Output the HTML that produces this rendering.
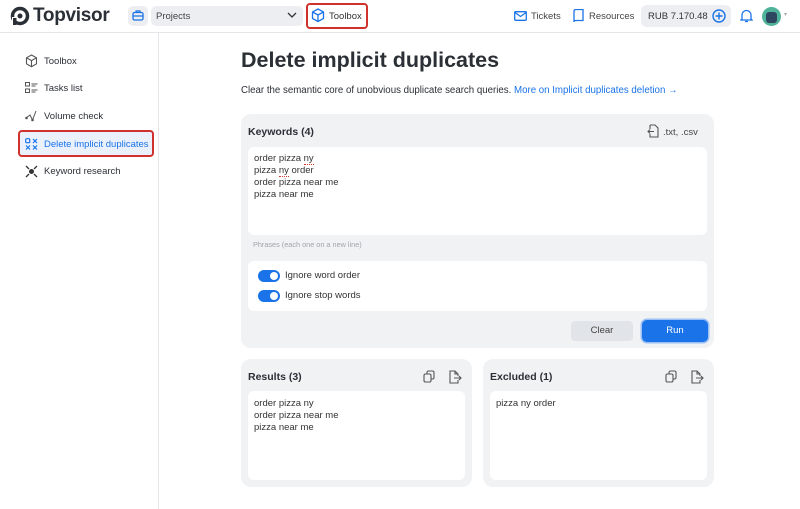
<!DOCTYPE html>
<html><head><style>
*{box-sizing:border-box;margin:0;padding:0}
body{width:800px;height:509px;background:#fff;font-family:"Liberation Sans",sans-serif;color:#2b2f36;position:relative;overflow:hidden;font-size:9.5px}
.a{position:absolute}
.hdr{left:0;top:0;width:800px;height:33px;border-bottom:1px solid #e4e6ea}
.side{left:158px;top:33px;width:1px;height:476px;background:#e4e6ea}
.nav{left:25px;font-size:9.5px;color:#2b2f36;display:flex;align-items:center;gap:6px}
.panel{background:#f1f2f4;border-radius:10px}
.box{background:#fff;border-radius:6px}
.tg{width:22px;height:12px;border-radius:6px;background:#1a73e8;position:absolute}
.tg::after{content:"";position:absolute;right:2px;top:2px;width:8px;height:8px;border-radius:50%;background:#fff}
.blue{color:#1a73e8}
.sp{background:linear-gradient(#fff,#fff);border-bottom:1px dotted #d33}
</style></head><body>
<div class="a hdr"></div>
<div class="a side"></div>
<svg class="a" style="left:10px;top:6px" width="20" height="20" viewBox="0 0 20 20"><circle cx="10" cy="10" r="7.5" fill="none" stroke="#2b2f36" stroke-width="3.5"/><circle cx="10" cy="10" r="2.5" fill="#2b2f36"/><rect x="2" y="11" width="4" height="8" fill="#fff"/><rect x="3" y="12" width="3.5" height="7" fill="#2b2f36"/></svg>
<div class="a" style="left:33px;top:5px;font-size:19px;font-weight:bold;color:#2b2f36;letter-spacing:-0.3px">Topvisor</div>
<div class="a" style="left:128px;top:6px;width:20px;height:20px;background:#eceef1;border-radius:5px"></div>
<svg class="a" style="left:132px;top:10px" width="12" height="11" viewBox="0 0 12 11"><rect x="1" y="2.5" width="10" height="7.5" rx="1.5" fill="none" stroke="#1a73e8" stroke-width="1.3"/><path d="M4 2.5V1h4v1.5M1 6h10" stroke="#1a73e8" stroke-width="1.2" fill="none"/></svg>
<div class="a" style="left:151px;top:6px;width:152px;height:20px;background:#eceef1;border-radius:5px"></div>
<div class="a" style="left:156px;top:11px;font-size:9.5px;color:#444">Projects</div>
<svg class="a" style="left:287px;top:12px" width="10" height="7"><path d="M1 1l4 4 4-4" stroke="#333" stroke-width="1.3" fill="none"/></svg>
<div class="a" style="left:306px;top:3px;width:62px;height:26px;border:2.5px solid #d0312d;border-radius:4px"></div>
<svg class="a" style="left:311px;top:8px" width="14" height="15" viewBox="0 0 14 15"><path d="M7 1l5.5 3v6.5L7 13.5 1.5 10.5V4z M1.5 4L7 7l5.5-3M7 7v6.5" stroke="#1a73e8" stroke-width="1.3" fill="none"/></svg>
<div class="a" style="left:329px;top:11px;color:#333">Toolbox</div>
<svg class="a" style="left:514px;top:11px" width="13" height="10"><rect x="0.7" y="0.7" width="11.6" height="8.6" rx="1" fill="none" stroke="#1a73e8" stroke-width="1.3"/><path d="M1 1.5l5.5 4 5.5-4" stroke="#1a73e8" stroke-width="1.2" fill="none"/></svg>
<div class="a" style="left:531px;top:11px;color:#444">Tickets</div>
<svg class="a" style="left:573px;top:9px" width="11" height="14"><path d="M1 2a1.5 1.5 0 0 1 1.5-1.5H10v11H2.5A1.5 1.5 0 0 0 1 13z M1 12.5V2" stroke="#1a73e8" stroke-width="1.3" fill="none"/></svg>
<div class="a" style="left:589px;top:11px;color:#444">Resources</div>
<div class="a" style="left:641px;top:5px;width:90px;height:22px;background:#eceef1;border-radius:6px"></div>
<div class="a" style="left:648px;top:11px;color:#333">RUB 7.170.48</div>
<svg class="a" style="left:712px;top:9px" width="14" height="14"><circle cx="7" cy="7" r="6" stroke="#1a73e8" stroke-width="1.4" fill="none"/><path d="M7 3.5v7M3.5 7h7" stroke="#1a73e8" stroke-width="1.4"/></svg>
<svg class="a" style="left:740px;top:8px" width="13" height="15"><path d="M2 11V7a4.5 4.5 0 0 1 9 0v4l1 1H1z M5 13.5h3" stroke="#1a73e8" stroke-width="1.3" fill="none"/></svg>
<div class="a" style="left:762px;top:7px;width:19px;height:19px;border-radius:50%;background:#4fb39a"></div>
<div class="a" style="left:766px;top:12px;width:11px;height:11px;border-radius:3px;background:#2e4660"></div>
<div class="a" style="left:784px;top:11px;font-size:6px;color:#aaa">▾</div>

<div class="a nav" style="top:54px"><svg width="13" height="14"><path d="M6.5 1l5 2.8v6L6.5 12.7 1.5 9.8v-6z M1.5 3.8l5 2.8 5-2.8M6.5 6.6v6" stroke="#555" stroke-width="1.1" fill="none"/></svg>Toolbox</div>
<div class="a nav" style="top:82px"><svg width="13" height="12"><rect x="0.5" y="0.5" width="4" height="3.5" stroke="#555" fill="none"/><rect x="0.5" y="7" width="4" height="3.5" stroke="#555" fill="none"/><path d="M6.5 2h6M6.5 4h4M6.5 8h6M6.5 10h4" stroke="#555"/></svg>Tasks list</div>
<div class="a nav" style="top:110px"><svg width="13" height="12"><path d="M1 8l4-3 2.5 5L11 1" stroke="#555" fill="none"/><circle cx="1.5" cy="8" r="1.3" fill="#555"/><circle cx="7.5" cy="10" r="1.3" fill="#555"/></svg>Volume check</div>
<div class="a" style="left:18px;top:130px;width:136px;height:27px;border:2.5px solid #d0312d;border-radius:4px;background:#eaf1fc"></div>
<div class="a nav blue" style="top:138px"><svg width="13" height="12"><rect x="0.7" y="0.7" width="4" height="4" rx="1" stroke="#1a73e8" fill="none" stroke-width="1.2"/><path d="M8 1l4 4M12 1L8 5M1 7.5l4 4M5 7.5l-4 4M8 7.5l4 4M12 7.5l-4 4" stroke="#1a73e8" stroke-width="1.2"/></svg>Delete implicit duplicates</div>
<div class="a nav" style="top:165px"><svg width="13" height="13"><circle cx="6.5" cy="6.5" r="2.5" fill="#333"/><path d="M1 1l3 3M12 1L9 4M1 12l3-3M12 12L9 9" stroke="#333" stroke-width="1.3"/></svg>Keyword research</div>

<div class="a" style="left:241px;top:48px;font-size:21.5px;font-weight:bold;color:#2b2f36">Delete implicit duplicates</div>
<div class="a" style="left:241px;top:85px;font-size:9.7px;color:#2b2f36">Clear the semantic core of unobvious duplicate search queries. <span class="blue">More on Implicit duplicates deletion →</span></div>

<div class="a panel" style="left:241px;top:114px;width:473px;height:234px"></div>
<div class="a" style="left:248px;top:126px;font-size:10.5px;font-weight:bold">Keywords (4)</div>
<svg class="a" style="left:647px;top:124px" width="12" height="14"><path d="M3 1h5l3 3v9H3v-3M3 5V1" stroke="#555" stroke-width="1.1" fill="none"/><path d="M7 7.5H1M3 5.5l-2 2 2 2" stroke="#555" stroke-width="1.1" fill="none"/></svg>
<div class="a" style="left:663px;top:127px;color:#444">.txt, .csv</div>
<div class="a box" style="left:248px;top:147px;width:459px;height:88px"></div>
<div class="a" style="left:254px;top:153px;line-height:12px;color:#333">order pizza <span class="sp">ny</span><br>pizza <span class="sp">ny</span> order<br>order pizza near me<br>pizza near me</div>
<div class="a" style="left:253px;top:240px;font-size:7.3px;color:#a0a4aa">Phrases (each one on a new line)</div>
<div class="a box" style="left:248px;top:261px;width:459px;height:50px"></div>
<div class="tg" style="left:258px;top:270px"></div>
<div class="a" style="left:285px;top:270px;color:#333">Ignore word order</div>
<div class="tg" style="left:258px;top:290px"></div>
<div class="a" style="left:285px;top:290px;color:#333">Ignore stop words</div>
<div class="a" style="left:571px;top:321px;width:62px;height:20px;background:#e1e4e9;border-radius:4px;text-align:center;line-height:20px;color:#444">Clear</div>
<div class="a" style="left:642px;top:320px;width:66px;height:22px;background:#1a73e8;border-radius:5px;box-shadow:0 0 0 1.5px #9cc0f5;text-align:center;line-height:22px;color:#fff">Run</div>

<div class="a panel" style="left:241px;top:359px;width:231px;height:128px"></div>
<div class="a" style="left:248px;top:371px;font-size:10.5px;font-weight:bold">Results (3)</div>
<svg class="a" style="left:423px;top:370px" width="12" height="13"><rect x="1" y="4" width="7" height="8" rx="1.5" stroke="#555" stroke-width="1.1" fill="none"/><path d="M4 4V2.5A1.5 1.5 0 0 1 5.5 1h4A1.5 1.5 0 0 1 11 2.5v5A1.5 1.5 0 0 1 9.5 9H8" stroke="#555" stroke-width="1.1" fill="none"/></svg>
<svg class="a" style="left:449px;top:370px" width="13" height="14"><path d="M9 10v3H1V1h5l3 3v2M6 1v3h3" stroke="#555" stroke-width="1.1" fill="none"/><path d="M5 8h7M10 6l2 2-2 2" stroke="#555" stroke-width="1.1" fill="none"/></svg>
<div class="a box" style="left:248px;top:391px;width:217px;height:89px"></div>
<div class="a" style="left:254px;top:398px;line-height:12px;color:#333">order pizza ny<br>order pizza near me<br>pizza near me</div>

<div class="a panel" style="left:483px;top:359px;width:231px;height:128px"></div>
<div class="a" style="left:490px;top:371px;font-size:10.5px;font-weight:bold">Excluded (1)</div>
<svg class="a" style="left:665px;top:370px" width="12" height="13"><rect x="1" y="4" width="7" height="8" rx="1.5" stroke="#555" stroke-width="1.1" fill="none"/><path d="M4 4V2.5A1.5 1.5 0 0 1 5.5 1h4A1.5 1.5 0 0 1 11 2.5v5A1.5 1.5 0 0 1 9.5 9H8" stroke="#555" stroke-width="1.1" fill="none"/></svg>
<svg class="a" style="left:691px;top:370px" width="13" height="14"><path d="M9 10v3H1V1h5l3 3v2M6 1v3h3" stroke="#555" stroke-width="1.1" fill="none"/><path d="M5 8h7M10 6l2 2-2 2" stroke="#555" stroke-width="1.1" fill="none"/></svg>
<div class="a box" style="left:490px;top:391px;width:217px;height:89px"></div>
<div class="a" style="left:496px;top:398px;color:#333">pizza ny order</div>
</body></html>
